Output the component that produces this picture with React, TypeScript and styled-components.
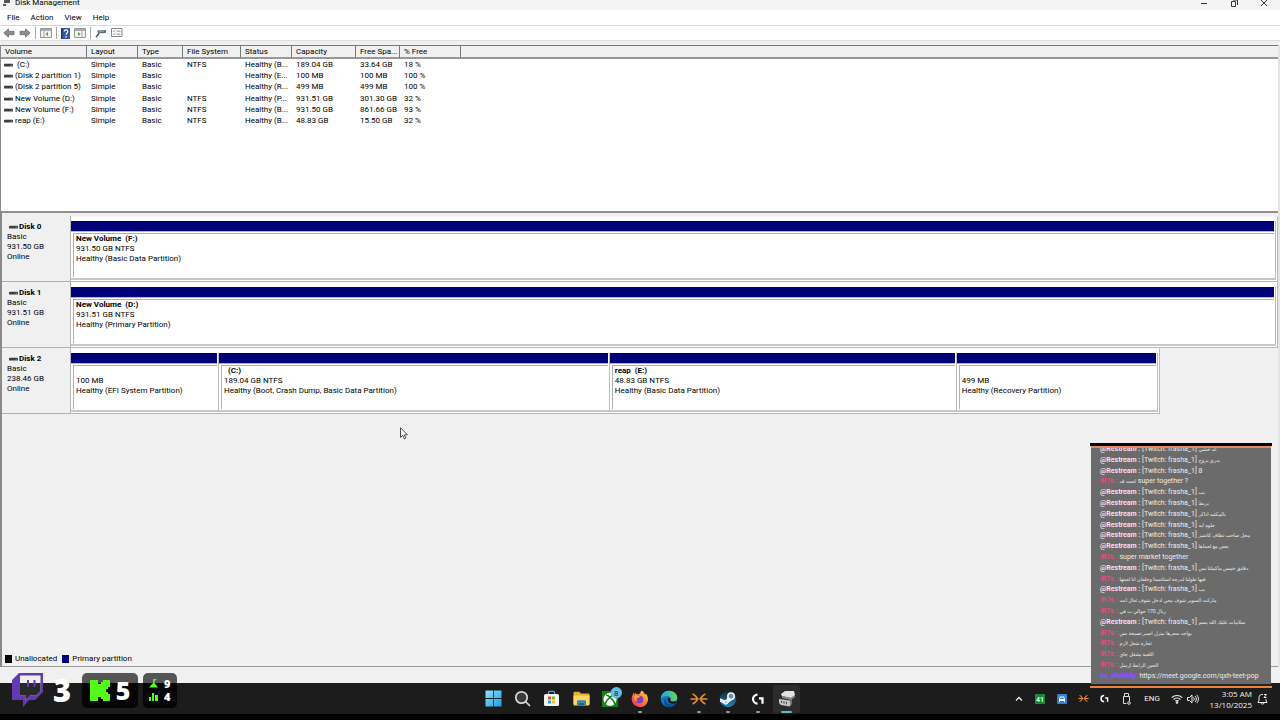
import React from "react";
import styled, { createGlobalStyle } from "styled-components";

const Global = createGlobalStyle`
  * { box-sizing: border-box; }
  body { margin: 0; background: #f0f0f0; color: #000; font: 8px/10px Roboto, "Open Sans", sans-serif; }
  button { font: inherit; color: inherit; border: 0; padding: 0; margin: 0; background: none; }
  svg { display: block; }
  ul { list-style: none; margin: 0; padding: 0; }
`;

const Desktop = styled.div`
  position: relative;
  min-height: 100vh;
  display: flex;
  flex-direction: column;
  overflow: hidden;
`;

const TitleBar = styled.header`
  display: flex;
  align-items: flex-end;
  justify-content: space-between;
  height: 10px;
  padding: 0 12px 2px 3px;
  background: #f3f3f3;
`;

const Title = styled.h1`
  display: flex;
  align-items: center;
  gap: 4px;
  margin: 0;
  font-size: 8px;
  font-weight: 400;
  line-height: 10px;
`;

const WindowButtons = styled.div`
  display: flex;
  gap: 22px;
`;

const MenuBar = styled.nav`
  display: flex;
  gap: 11px;
  height: 15px;
  padding: 2px 7px;
  background: #fff;
`;

const ToolBar = styled.div`
  display: flex;
  align-items: center;
  gap: 4px;
  height: 16px;
  padding: 0 3px;
  background: #fff;
  border-top: 1px solid #d9d9d9;
  border-bottom: 1px solid #dedede;
`;

const Divider = styled.span`
  width: 1px;
  height: 12px;
  background: #a8a8a8;
`;

const Main = styled.main`
  flex: 1;
  display: flex;
  flex-direction: column;
  margin-top: 4px;
  border-left: 2px solid #8a8a8a;
  border-right: 2px solid #e4e4e4;
`;

const VolumePane = styled.section`
  height: 166px;
  margin-left: -1px;
  background: #fff;
  border-top: 1px solid #777;
`;

const VolumeTable = styled.table`
  width: 100%;
  height: 81px;
  table-layout: fixed;
  border-collapse: separate;
  border-spacing: 0;

  th, td {
    padding: 0 0 0 4px;
    text-align: left;
    font-weight: 400;
    white-space: nowrap;
    overflow: hidden;
  }
  th {
    height: 13px;
    background: #f0f0f0;
    border-right: 1px solid #777;
    border-bottom: 2px solid #999;
  }
  th:last-child { border-right: 0; }
  td { line-height: 10px; }
  td:first-child { padding-left: 3px; }
`;

const VolumeName = styled.span`
  display: flex;
  align-items: center;
  gap: 2px;
  white-space: pre;
`;

const DiskPane = styled.section`
  flex: 1;
  padding-top: 3px;
  border-top: 2px solid #919191;
`;

const DiskRow = styled.article`
  display: grid;
  grid-template-columns: 69px 1fr;
  height: 66px;
`;

const DiskInfo = styled.div`
  padding: 6px 5px;
  border-right: 1px solid #b5b5b5;
  border-bottom: 1px solid #b0b0b0;
`;

const DiskName = styled.h2`
  display: flex;
  align-items: center;
  gap: 1px;
  margin: 0;
  padding-left: 2px;
  font-size: 8px;
  line-height: 10px;
`;

const Strip = styled.div<{ $columns: string; $width: string }>`
  display: grid;
  grid-template-columns: ${(p) => p.$columns};
  width: ${(p) => p.$width};
  padding: 4px 1px 1px 0;
  background: #fff;
  border-right: 1px solid #bbb;
  border-bottom: 1px solid #b8b8b8;
  border-top: 1px solid #f8f8f8;
`;

const Partition = styled.div`
  display: flex;
  flex-direction: column;
  border-right: 1px solid #bcbcbc;
  border-bottom: 2px solid #c8c8c8;

  &::before {
    content: "";
    height: 10px;
    margin-right: 1px;
    background: #000078;
    border-bottom: 1px solid #b4b4b4;
  }
`;

const PartitionBody = styled.div`
  flex: 1;
  margin: 1px 1px 1px 2px;
  padding: 0 2px;
  border-top: 1px solid #b0b0b0;
  border-left: 1px solid #b0b0b0;
  white-space: pre;

  strong, span { display: block; min-height: 10px; }
`;

const Legend = styled.ul`
  display: flex;
  align-items: center;
  gap: 5px;
  height: 15px;
  padding: 0 3px;
  border-bottom: 1px solid #9b9b9b;
`;

const LegendItem = styled.li<{ $color: string }>`
  display: flex;
  align-items: center;
  gap: 3px;

  &::before {
    content: "";
    width: 7px;
    height: 8px;
    background: ${(p) => p.$color};
  }
`;

const StatusBar = styled.footer`
  height: 16px;
  background: #f0f0f0;
`;

const TaskBar = styled.footer`
  display: grid;
  grid-template-columns: 1fr auto 1fr;
  align-items: center;
  height: 37px;
  background: #1c1c1c;
  border-bottom: 6px solid #000;
`;

const Apps = styled.div`
  grid-column: 2;
  display: flex;
  justify-content: space-between;
  width: 321px;
`;

const AppButton = styled.button<{ $active?: boolean; $running?: boolean }>`
  position: relative;
  display: grid;
  place-items: center;
  width: 27px;
  height: 28px;
  border-radius: 3px;
  background: ${(p) => (p.$active ? "#2c2c2c" : "none")};

  &::after {
    content: "";
    position: absolute;
    bottom: 0;
    width: ${(p) => (p.$active ? "11px" : "4px")};
    height: 2px;
    border-radius: 1px;
    background: ${(p) => (p.$active ? "#58b7e0" : p.$running ? "#999" : "none")};
  }
`;

const Tray = styled.div`
  justify-self: end;
  display: flex;
  align-items: center;
  padding-right: 11px;
  color: #f2f2f2;
`;

const TrayButton = styled.button<{ $width: number }>`
  display: grid;
  place-items: center;
  width: ${(p) => p.$width}px;
  height: 20px;
`;

const Clock = styled.time`
  width: 53px;
  margin-right: 4px;
  text-align: right;
  font-family: "Open Sans", sans-serif;
  line-height: 11px;
  white-space: nowrap;
`;

const Chat = styled.aside`
  position: absolute;
  right: 8px;
  bottom: 32px;
  width: 182px;
  height: 245px;
  display: flex;
  flex-direction: column;
  border-top: 3px solid #000;
  border-bottom: 2px solid #f08040;
`;

const ChatBody = styled.div`
  flex: 1;
  display: flex;
  flex-direction: column;
  min-height: 0;
  margin: 0 1px;
  background: #6b6b6b;
  border-top: 2px solid #e08a5c;
  border-bottom: 2px solid #222;
  overflow: hidden;
`;

const Messages = styled.ul`
  flex: 1;
  display: flex;
  flex-direction: column;
  justify-content: space-between;
  margin-top: -4px;
  padding: 0 2px 3px 9px;
  color: #ececec;
  font-family: Roboto, "DejaVu Sans", sans-serif;
  font-size: 7px;
  white-space: nowrap;

  li { height: 10px; }
  a { color: inherit; text-decoration: none; }
`;

const Arabic = styled.span`
  font-size: 5px;
`;

const Author = styled.b<{ $color: string }>`
  color: ${(p) => p.$color};
`;

const Counters = styled.aside`
  position: absolute;
  left: 11px;
  bottom: 12px;
  display: flex;
  align-items: center;
  color: #fff;
  font-family: "Open Sans", sans-serif;
  font-weight: 800;
`;

const Count = styled.span<{ $size: number }>`
  font-size: ${(p) => p.$size}px;
  line-height: ${(p) => p.$size}px;
`;

const TwitchCount = styled.div`
  display: flex;
  align-items: center;
  gap: 10px;
  width: 71px;
  height: 36px;
`;

const Pill = styled.div<{ $width: number }>`
  display: flex;
  align-items: center;
  justify-content: center;
  gap: 6px;
  width: ${(p) => p.$width}px;
  height: 35px;
  margin-right: 5px;
  border-radius: 5px;
  background: linear-gradient(#555 0 10px, #050505 10px);
`;

const Stats = styled.div`
  display: grid;
  grid-template-columns: 10px 7px;
  align-items: center;
  gap: 2px 5px;
`;

const Pointer = styled.svg`
  position: absolute;
  left: 400px;
  top: 427px;
`;

const DriveIcon = () => (
  <svg width="9" height="6" viewBox="0 0 9 6" aria-hidden="true">
    <path d="M1 1h7l1 1H0z" fill="#c4c4c4" />
    <rect y="2" width="9" height="2.500" rx=".5" fill="#3c3c3c" />
    <path d="M6.500 3.300h1.500" stroke="#7a9a7a" />
  </svg>
);

const ArrowIcon = ({ flip }: { flip?: boolean }) => (
  <svg width="12" height="10" viewBox="0 0 12 10" aria-hidden="true">
    <path d={flip ? "M11.2 5 6.5.8v2.5H1v3.4h5.500v2.500z" : "M.8 5 5.500.8v2.500H11v3.400H5.500v2.500z"} fill="#8d8d8d" stroke="#666" strokeWidth=".7" />
  </svg>
);

const PanelIcon = ({ flip }: { flip?: boolean }) => (
  <svg width="12" height="10" viewBox="0 0 12 10" aria-hidden="true">
    <path d="M.5.5h11v9H.5z" fill="#f2f2ee" stroke="#999" />
    <path d="M1 2h10" stroke="#8d959d" strokeWidth="1.5" />
    <path d={flip ? "M8 3v6" : "M4 3v6"} stroke="#aaa" />
    <path d={flip ? "m4 4 2.500 2L4 8z" : "M8 4 5.500 6 8 8z"} fill="#52a040" />
  </svg>
);

const HelpIcon = () => (
  <svg width="9" height="11" viewBox="0 0 9 11" aria-hidden="true">
    <path d="M0 0h9v11H0z" fill="#3656a8" />
    <path d="M0 0h1.500v11H0z" fill="#1e3474" />
    <path d="M3.200 3.500c0-2.200 3.600-2.200 3.600 0 0 1.500-1.700 1.500-1.700 3.200M5.100 8v1.400" fill="none" stroke="#fff" strokeWidth="1.200" />
  </svg>
);

const RefreshDiskIcon = () => (
  <svg width="12" height="10" viewBox="0 0 12 10" aria-hidden="true">
    <path d="M2 2.500 11 2v3l-8 .5z" fill="#5c7480" />
    <path d="m1 9 3-3.500" stroke="#444" strokeWidth="1.300" />
    <path d="M4 3.500h5" stroke="#5cb86c" />
  </svg>
);

const ListIcon = () => (
  <svg width="12" height="10" viewBox="0 0 12 10" aria-hidden="true">
    <path d="M.5.5h10.500v8H.5z" fill="#fafafa" stroke="#8a8a8a" />
    <path d="m2 3 .7.7L4 2.300M2 6l.7.7L4 5.300M5.500 3.200H9.500M5.500 6.200H9.500" fill="none" stroke="#777" strokeWidth=".8" />
  </svg>
);

const WindowsLogo = () => (
  <svg width="17" height="17" viewBox="0 0 17 17" aria-hidden="true">
    <defs>
      <linearGradient id="win" x2="1" y2="1"><stop stopColor="#8fe3fb" /><stop offset="1" stopColor="#1b9de2" /></linearGradient>
    </defs>
    <path d="M.5.5h7.600v7.600H.5zM8.900.5h7.600v7.600H8.900zM.5 8.900h7.600v7.600H.5zM8.900 8.900h7.600v7.600H8.900z" fill="url(#win)" />
  </svg>
);

const SearchIcon = () => (
  <svg width="17" height="17" viewBox="0 0 17 17" fill="none" stroke="#d8d8d8" strokeWidth="1.700" strokeLinecap="round" aria-hidden="true">
    <circle cx="7.500" cy="7.500" r="5.700" fill="#3a3a3a" />
    <path d="m12 12 3.500 3.500" />
  </svg>
);

const StoreIcon = () => (
  <svg width="17" height="17" viewBox="0 0 17 17" aria-hidden="true">
    <path d="M5.500 5V2.200c0-.5.300-.9.900-.9h4.200c.6 0 .9.400.9.900V5" fill="none" stroke="#4ba7d8" strokeWidth="1.300" />
    <rect x="1" y="4" width="15" height="12" rx="1.500" fill="#f4f4f4" />
    <path d="M5 6.500h3v3H5z" fill="#e55325" /><path d="M9 6.500h3v3H9z" fill="#7dba2d" />
    <path d="M5 10.500h3v3H5z" fill="#2ca0dc" /><path d="M9 10.500h3v3H9z" fill="#f8bc28" />
  </svg>
);

const FolderIcon = () => (
  <svg width="17" height="17" viewBox="0 0 17 17" aria-hidden="true">
    <path d="M.5 3c0-.8.500-1.300 1.200-1.300h4.600L8 3.500h7.300c.7 0 1.200.5 1.200 1.200V14H.5z" fill="#e9ac2c" />
    <path d="M.5 5.500h16v9c0 .5-.4.900-.9.900H1.400c-.5 0-.9-.4-.9-.9z" fill="#fbd662" />
    <path d="M4 15.400v-3.700c0-.9.600-1.500 1.500-1.500h6c.9 0 1.500.6 1.500 1.500v3.700h-1.800v-2.600H5.800v2.600z" fill="#2584c4" />
    <path d="M5.800 12.800h5.400v2.600H5.800z" fill="#1b6394" />
  </svg>
);

const XboxIcon = () => (
  <svg width="23" height="23" viewBox="0 0 23 23" aria-hidden="true">
    <path d="M3 4h16v16H3z" fill="#128012" />
    <circle cx="11" cy="12.300" r="6.500" fill="#fff" />
    <path d="M7 8.300c1.500-.3 3.100.9 4 1.900.9-1 2.500-2.200 4-1.900M6.200 17c.5-2.400 2.700-5 4.800-6.600 2.100 1.600 4.300 4.200 4.800 6.600" fill="none" stroke="#128012" strokeWidth="1.500" />
    <circle cx="17.300" cy="5.700" r="5.700" fill="#62bfe4" />
    <text x="17.300" y="8.600" fontSize="8" textAnchor="middle" fill="#123">8</text>
  </svg>
);

const FirefoxIcon = () => (
  <svg width="18" height="18" viewBox="0 0 18 18" aria-hidden="true">
    <defs>
      <linearGradient id="fox" x1="1" x2="0" y2="1"><stop stopColor="#ffe14a" /><stop offset=".45" stopColor="#ff7b2c" /><stop offset="1" stopColor="#e22c78" /></linearGradient>
    </defs>
    <path d="M10.500.5c2.500 1.500 3.200 3 3.400 4.200l1.200-1c2.700 4 2.300 8.200-.1 10.700-3.200 3.500-8.900 3.300-12.100.2C.5 12.100-.1 8.100 1.700 4.700l.7-1.900 1.400 1.400 1-1.400.9 1.500c2-.1 3.100-.3 3.400-1.300.3-.8.700-1.600 1.400-2.500z" fill="url(#fox)" />
    <circle cx="8.500" cy="9.500" r="3.800" fill="#7542c8" />
    <path d="M3 6c2.500-1.700 4.300-.4 6.400.6-1 1.300-2.200.7-3.200 1.700-1 1-.3 2.300.6 3-2.300.3-4.400-2-3.800-5.300z" fill="#ff9640" />
  </svg>
);

const EdgeIcon = () => (
  <svg width="18" height="18" viewBox="0 0 18 18" aria-hidden="true">
    <defs>
      <linearGradient id="edge" x2="1"><stop stopColor="#2ba3e2" /><stop offset="1" stopColor="#63d65a" /></linearGradient>
    </defs>
    <circle cx="9" cy="9" r="8.300" fill="#1575c4" />
    <path d="M.7 8.500C1.100 4 4.500.7 9 .7c4.800 0 8.300 3.300 8.300 6.900 0 2.500-1.800 4-4.100 4-1.900 0-3-.7-2.700-1.400.9-1.600-.2-4.200-3.200-4.200C4.500 6 1.700 6.900.7 8.500z" fill="url(#edge)" />
    <path d="M6 8.500c-.8 4 2.400 7 7.700 5.600l2.200-.8C13.500 17.400 8.800 18 5.700 15.500 3.200 13.500 3.700 9.700 6 8.500z" fill="#114b91" />
    <path d="M7.600 8.400c.7-1.500 3-.8 2.900 1.400-.4.900.8 1.800 2.700 1.800 1.300 0 2.500-.4 3.300-1.400l-.4 3c-4.300 1.900-9.300-.4-8.500-4.800z" fill="#1c1c1c" />
  </svg>
);

const ConvergeIcon = ({ size = 18 }: { size?: number }) => (
  <svg width={size} height={size} viewBox="0 0 18 18" fill="none" stroke="#e88d25" strokeWidth="1.700" aria-hidden="true">
    <path d="M2.500 4.200c2 .2 3.300 2 5.300 4.800-2 2.800-3.300 4.600-5.300 4.800M15.500 4.200c-2 .2-3.300 2-5.300 4.800 2 2.800 3.300 4.600 5.300 4.800M.5 9h7.300M10.200 9h7.300" />
  </svg>
);

const SteamIcon = () => (
  <svg width="18" height="18" viewBox="0 0 18 18" aria-hidden="true">
    <defs><linearGradient id="steam" x2="0" y2="1"><stop stopColor="#142338" /><stop offset="1" stopColor="#2584bd" /></linearGradient></defs>
    <circle cx="9" cy="9" r="8.300" fill="url(#steam)" />
    <path d="m1 8.300 5.600 2.200L9 6.500l5.500 2.500-5.300 4-3 1.500L1 11.800z" fill="#e8eef4" />
    <circle cx="12" cy="6.200" r="3.200" fill="#6d8eab" stroke="#f4f6f8" strokeWidth="1.500" />
    <circle cx="7" cy="12.300" r="1.900" fill="#b8d0e2" stroke="#f4f6f8" />
  </svg>
);

const LogitechIcon = ({ size = 16 }: { size?: number }) => (
  <svg width={size} height={size} viewBox="0 0 16 16" fill="none" stroke="#fff" strokeWidth="2.200" aria-hidden="true">
    <path d="M7.500 3.600a4.500 4.500 0 0 0 0 9M9 7.300h3.500v5.400" />
  </svg>
);

const DiskAppIcon = () => (
  <svg width="18" height="18" viewBox="0 0 18 18" aria-hidden="true">
    <path d="m3 4 4-3h9l1 4-4 3-9-2z" fill="#e2e2e2" /><path d="m4 6 9 2 4-3v2l-4 3-9-2z" fill="#8a8a8a" />
    <path d="m1 9 11 1.500v6L3 15l-2-2z" fill="#c5c5c5" /><path d="m12 10.500 2-1.500v5l-2 2.500z" fill="#777" />
    <path d="M3.500 11v2M6 11.300v2.500M8.500 11.700v2.500" stroke="#444" />
  </svg>
);

const TwitchLogo = () => (
  <svg width="32" height="36" viewBox="0 0 32 36" aria-hidden="true">
    <path d="M8 1h24v19l-8 8h-6l-6 7v-7H1V8z" fill="#643ab0" />
    <path d="M9 3.500h20.500V19L25 23.500h-6L14.500 28v-4.500H9z" fill="#eee" />
    <path d="M9 11h20.500v8L25 23.500h-6L14.500 28v-4.500H9z" fill="#292929" />
    <path d="M17 8v7M23.500 8v7" stroke="#643ab0" strokeWidth="2" />
  </svg>
);

const KickLogo = () => (
  <svg width="20" height="21" viewBox="0 0 20 21" aria-hidden="true">
    <path d="M0 0h8v4h3V2h2V0h7v7h-2v2h-2v3h2v2h2v7h-7v-2h-2v-2H8v4H0z" fill="#53fc18" />
  </svg>
);

type Volume = [string, string, string, string, string, string];

const volumes: Volume[] = [
  [" (C:)", "NTFS", "Healthy (B...", "189.04 GB", "33.64 GB", "18 %"],
  ["(Disk 2 partition 1)", "", "Healthy (E...", "100 MB", "100 MB", "100 %"],
  ["(Disk 2 partition 5)", "", "Healthy (R...", "499 MB", "499 MB", "100 %"],
  ["New Volume (D:)", "NTFS", "Healthy (P...", "931.51 GB", "301.30 GB", "32 %"],
  ["New Volume (F:)", "NTFS", "Healthy (B...", "931.50 GB", "861.66 GB", "93 %"],
  ["reap (E:)", "NTFS", "Healthy (B...", "48.83 GB", "15.50 GB", "32 %"],
];

const columns: [string, number | undefined][] = [
  ["Volume", 86], ["Layout", 51], ["Type", 45], ["File System", 58], ["Status", 51],
  ["Capacity", 64], ["Free Spa...", 44], ["% Free", 61], ["", undefined],
];

const disks = [
  { name: "Disk 0", size: "931.50 GB", columns: "1fr", width: "100%", parts: [["New Volume  (F:)", "931.50 GB NTFS", "Healthy (Basic Data Partition)"]] },
  { name: "Disk 1", size: "931.51 GB", columns: "1fr", width: "100%", parts: [["New Volume  (D:)", "931.51 GB NTFS", "Healthy (Primary Partition)"]] },
  {
    name: "Disk 2", size: "238.46 GB", columns: "148fr 391fr 347fr 201fr", width: "90.2%",
    parts: [
      ["", "100 MB", "Healthy (EFI System Partition)"],
      ["  (C:)", "189.04 GB NTFS", "Healthy (Boot, Crash Dump, Basic Data Partition)"],
      ["reap  (E:)", "48.83 GB NTFS", "Healthy (Basic Data Partition)"],
      ["", "499 MB", "Healthy (Recovery Partition)"],
    ],
  },
];

type Message = { from: "restream" | "viewer" | "host"; text?: string; arabic?: string };

const messages: Message[] = [
  { from: "restream", arabic: "عد خشي" },
  { from: "restream", arabic: "بدري بروح" },
  { from: "restream", text: "8" },
  { from: "viewer", arabic: "لعبت قد", text: " super together ?" },
  { from: "restream", arabic: "يب" },
  { from: "restream", arabic: "بزبط" },
  { from: "restream", arabic: "بالمكتبه اذاكر" },
  { from: "restream", arabic: "حلوه ايه" },
  { from: "restream", arabic: "محل صاحب نظاف كاشير" },
  { from: "restream", arabic: "بعض مع لعبناها" },
  { from: "viewer", text: "super market together" },
  { from: "restream", arabic: "دقايق خمس ماكملنا بس" },
  { from: "viewer", arabic: "فيها طولنا لدرجة استانسنا وخلقان انا لعبتها" },
  { from: "restream", arabic: "يب" },
  { from: "viewer", arabic: "ماركت السوبر شوف معي ادخل شوف تعال انت" },
  { from: "viewer", arabic: "ريال 170 حوالي ب في" },
  { from: "restream", arabic: "سلامات عليك الله بسم" },
  { from: "viewer", arabic: "يواجد سعرها بينزل اصبر نصيحة بس" },
  { from: "viewer", arabic: "تجارة شغل لازم" },
  { from: "viewer", arabic: "اللعبة يشغل جاي" },
  { from: "viewer", arabic: "الحين الرابط ارسل" },
];

const authors = {
  restream: <><Author $color="#ffdce8">@Restream :</Author> [Twitch: frasha_1] </>,
  viewer: <><Author $color="#e84a78">iR7s :</Author> </>,
  host: <><Author $color="#9b4dff">8s_shahidp:</Author> </>,
};

const apps: { name: string; icon: React.ReactNode; running?: boolean; active?: boolean }[] = [
  { name: "Start", icon: <WindowsLogo /> },
  { name: "Search", icon: <SearchIcon /> },
  { name: "Microsoft Store", icon: <StoreIcon /> },
  { name: "File Explorer", icon: <FolderIcon /> },
  { name: "Xbox", icon: <XboxIcon /> },
  { name: "Firefox", icon: <FirefoxIcon />, running: true },
  { name: "Edge", icon: <EdgeIcon /> },
  { name: "Restream", icon: <ConvergeIcon />, running: true },
  { name: "Steam", icon: <SteamIcon />, running: true },
  { name: "G HUB", icon: <LogitechIcon />, running: true },
  { name: "Disk Management", icon: <DiskAppIcon />, active: true },
];

export default function App() {
  return (
    <Desktop>
      <Global />
      <TitleBar>
        <Title>
          <svg width="8" height="8" viewBox="0 0 8 8" aria-hidden="true"><path d="M1 1h6v3H1zM0 5h3v2H0z" fill="#555" /></svg>
          Disk Management
        </Title>
        <WindowButtons>
          <button aria-label="Minimize"><svg width="8" height="8" viewBox="0 0 8 8"><path d="M1 3.500h6" stroke="#333" /></svg></button>
          <button aria-label="Restore"><svg width="8" height="8" viewBox="0 0 8 8" fill="none" stroke="#333"><path d="M1.500 1.500h4v5h-4zM3 0h4.500v5" /></svg></button>
          <button aria-label="Close"><svg width="8" height="8" viewBox="0 0 8 8" stroke="#333"><path d="m1 0 6 6M7 0 1 6" /></svg></button>
        </WindowButtons>
      </TitleBar>
      <MenuBar>
        {["File", "Action", "View", "Help"].map((m) => <button key={m}>{m}</button>)}
      </MenuBar>
      <ToolBar>
        <button aria-label="Back"><ArrowIcon /></button>
        <button aria-label="Forward"><ArrowIcon flip /></button>
        <Divider />
        <button aria-label="Console tree"><PanelIcon /></button>
        <Divider />
        <button aria-label="Help topics"><HelpIcon /></button>
        <button aria-label="Action pane"><PanelIcon flip /></button>
        <Divider />
        <button aria-label="Rescan disks"><RefreshDiskIcon /></button>
        <button aria-label="Settings"><ListIcon /></button>
      </ToolBar>
      <Main>
        <VolumePane>
          <VolumeTable>
            <colgroup>{columns.map(([name, width]) => <col key={name} width={width} />)}</colgroup>
            <thead>
              <tr>{columns.map(([name]) => <th key={name} scope="col">{name}</th>)}</tr>
            </thead>
            <tbody>
              {volumes.map(([name, ...rest]) => (
                <tr key={name}>
                  <td><VolumeName><DriveIcon />{name}</VolumeName></td>
                  <td>Simple</td>
                  <td>Basic</td>
                  {rest.map((cell, i) => <td key={i}>{cell}</td>)}
                  <td />
                </tr>
              ))}
            </tbody>
          </VolumeTable>
        </VolumePane>
        <DiskPane>
          {disks.map((disk) => (
            <DiskRow key={disk.name}>
              <DiskInfo>
                <DiskName><DriveIcon />{disk.name}</DiskName>
                <div>Basic</div>
                <div>{disk.size}</div>
                <div>Online</div>
              </DiskInfo>
              <Strip $columns={disk.columns} $width={disk.width}>
                {disk.parts.map(([name, size, health]) => (
                  <Partition key={health}>
                    <PartitionBody>
                      <strong>{name}</strong>
                      <span>{size}</span>
                      <span>{health}</span>
                    </PartitionBody>
                  </Partition>
                ))}
              </Strip>
            </DiskRow>
          ))}
        </DiskPane>
        <Legend>
          <LegendItem $color="#000">Unallocated</LegendItem>
          <LegendItem $color="#000078">Primary partition</LegendItem>
        </Legend>
      </Main>
      <StatusBar />
      <TaskBar>
        <Apps>
          {apps.map((app) => (
            <AppButton key={app.name} aria-label={app.name} $running={app.running} $active={app.active}>{app.icon}</AppButton>
          ))}
        </Apps>
        <Tray>
          <TrayButton $width={21} aria-label="Show hidden icons">
            <svg width="8" height="6" viewBox="0 0 8 6" fill="none" stroke="#eee" strokeWidth="1.300"><path d="m1 4.500 3-3 3 3" /></svg>
          </TrayButton>
          <TrayButton $width={22} aria-label="Temperature">
            <svg width="10" height="10" viewBox="0 0 10 10"><path d="M0 0h10v10H0z" fill="#16883a" /><text x="5" y="7.700" fontSize="7" fontWeight="700" textAnchor="middle" fill="#d8ffd8">41</text></svg>
          </TrayButton>
          <TrayButton $width={21} aria-label="Car">
            <svg width="10" height="10" viewBox="0 0 10 10"><rect width="10" height="10" rx="1" fill="#3480cc" /><path d="m2 5 1-2.500h4L8 5v3H7V7H3v1H2z" fill="#fff" /><path d="M3.500 3.500h3L7 5H3z" fill="#3480cc" /></svg>
          </TrayButton>
          <TrayButton $width={22} aria-label="Restream"><ConvergeIcon size={11} /></TrayButton>
          <TrayButton $width={21} aria-label="G HUB"><LogitechIcon size={11} /></TrayButton>
          <TrayButton $width={22} aria-label="Eject device">
            <svg width="9" height="12" viewBox="0 0 9 12" fill="none" stroke="#ddd"><path d="M2.500 3.500v-3h4v3M1.500 3.500h6v5M1.500 3.500v7h3" /><circle cx="7" cy="10" r="1.300" /></svg>
          </TrayButton>
          <TrayButton $width={30}>ENG</TrayButton>
          <TrayButton $width={19} aria-label="Wi-Fi">
            <svg width="12" height="10" viewBox="0 0 12 10" fill="none" stroke="#eee" strokeWidth="1.100"><path d="M.7 3.700c3-3 7.600-3 10.600 0M2.500 5.500c2-2 5-2 7 0M4.200 7.200c1-1 2.600-1 3.600 0" /><circle cx="6" cy="8.600" r=".7" fill="#eee" /></svg>
          </TrayButton>
          <TrayButton $width={13} aria-label="Volume">
            <svg width="12" height="10" viewBox="0 0 12 10" fill="none" stroke="#eee"><path d="M.5 3.500h2L5 1v8L2.500 6.500h-2zM6.500 3.300c1 1 1 2.400 0 3.400M8 2c1.800 1.800 1.800 4.200 0 6M9.600.8c2.400 2.400 2.400 6 0 8.400" /></svg>
          </TrayButton>
          <Clock>3:05 AM<br />13/10/2025</Clock>
          <TrayButton $width={13} aria-label="Notifications">
            <svg width="11" height="12" viewBox="0 0 11 12" fill="none" stroke="#eee"><path d="M6 1.500c-2.500-.5-4 1-4 3v2.800L1 9.500h9L9 7.300V6M4 10c.3 1.500 2.700 1.500 3 0M7 1.500h2.500l-2.500 3h2.500" /></svg>
          </TrayButton>
        </Tray>
      </TaskBar>

      <Chat aria-label="Stream chat">
        <ChatBody>
          <Messages>
            {messages.map(({ from, arabic, text }, i) => (
              <li key={i}>
                {authors[from]}
                {arabic && <Arabic lang="ar">{arabic}</Arabic>}
                {text}
              </li>
            ))}
            <li>{authors.host}<a href="https://meet.google.com/qxh-teet-pop">https://meet.google.com/qxh-teet-pop</a></li>
          </Messages>
        </ChatBody>
      </Chat>

      <Counters aria-label="Viewer counts">
        <TwitchCount><TwitchLogo /><Count $size={31}>3</Count></TwitchCount>
        <Pill $width={56}><KickLogo /><Count $size={25}>5</Count></Pill>
        <Pill $width={34}>
          <Stats>
            <svg width="9" height="9" viewBox="0 0 9 9" fill="#53fc18" aria-hidden="true"><path d="M4 0h4L5.500 2v2L9 8.500H0L4 4z" /></svg>
            <Count $size={11}>9</Count>
            <svg width="9" height="9" viewBox="0 0 9 9" fill="#53fc18" aria-hidden="true"><path d="M0 5h2v4H0zM3 1h2v8H3zM6 3h3v6H6z" /></svg>
            <Count $size={11}>4</Count>
          </Stats>
        </Pill>
      </Counters>

      <Pointer width="8" height="13" viewBox="0 0 8 13" aria-hidden="true">
        <path d="M.5.7v9.800l2.300-2.200 1.500 3.500 1.500-.7-1.500-3.300h3z" fill="#fff" stroke="#222" strokeWidth=".8" />
      </Pointer>
    </Desktop>
  );
}
